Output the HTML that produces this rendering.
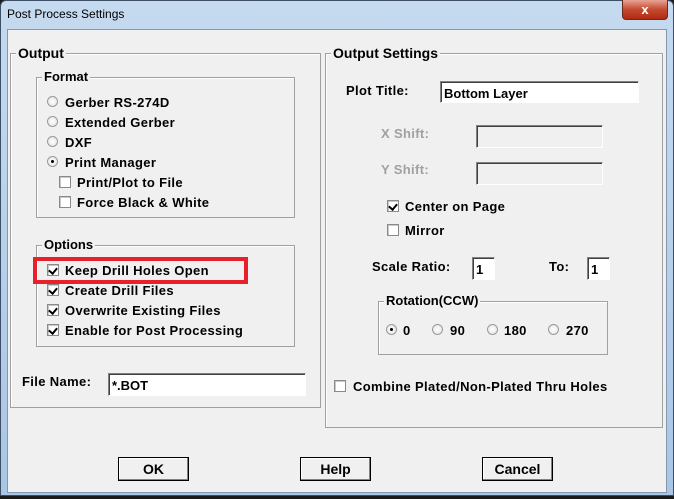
<!DOCTYPE html>
<html><head><meta charset="utf-8"><style>
*{margin:0;padding:0;box-sizing:border-box}
body{width:674px;height:499px;overflow:hidden;background:#1a1a1a;font-family:"Liberation Sans",Arial,sans-serif;font-weight:bold;font-size:13px;color:#000;position:relative}
.a{position:absolute}
.frame{left:0;top:0;width:674px;height:496px;background:linear-gradient(#c5daef,#a9c6e6);border:1px solid #3c4f66;border-radius:6px 6px 0 0}
.client{left:7px;top:29px;width:660px;height:464px;background:#f0f0f0;border:1px solid #8397b0}
.gb{position:absolute;border:1px solid #a0a0a0;box-shadow:1px 1px 0 #fff inset}
.gl{position:absolute;background:#f0f0f0;padding:0 2px;line-height:14px}
.t{position:absolute;line-height:14px;white-space:nowrap;letter-spacing:0.35px;margin-top:1px}
.rb{position:absolute;width:11px;height:11px;border-radius:50%;border:1px solid #9a9a9a;background:radial-gradient(#fff,#e0e0e0)}
.rb.on::after{content:"";position:absolute;left:3px;top:3px;width:3px;height:3px;background:#000;border-radius:50%}
.cb{position:absolute;width:12px;height:12px;border:1px solid #8a8a8a;background:#fff;box-shadow:inset 1px 1px 0 #c8c8c8}
.cb.on::after{content:"";position:absolute;left:2px;top:1px;width:4px;height:6px;border:solid #000;border-width:0 2px 2px 0;transform:rotate(40deg)}
.inp{position:absolute;background:#fff;border:1px solid;border-color:#808080 #fff #fff #808080;box-shadow:inset 1px 1px 0 #404040;padding:4px 0 0 3px;font-size:13px;line-height:15px}
.dis{background:#f0f0f0}
.btn{position:absolute;height:24px;border:1px solid #000;background:#f0f0f0;box-shadow:inset -1px -1px 0 #808080,inset 1px 1px 0 #fff;text-align:center;line-height:22px;font-family:"Liberation Sans Narrow","Liberation Sans",sans-serif;font-size:14px}
.g{color:#a0a0a0}
</style></head><body>
<div class="a frame"></div>
<div class="a" style="left:7px;top:7px;font-weight:normal;font-size:12px;color:#000">Post Process Settings</div>
<div class="a" style="left:622px;top:0;width:46px;height:20px;background:linear-gradient(#e8a494,#c44a30 50%,#b02a10);border:1px solid #6b2a20;border-top:none;border-radius:0 0 4px 4px;color:#fff;text-align:center;line-height:19px;font-size:13px">x</div>
<div class="a client"></div>

<div class="gb" style="left:10px;top:53px;width:311px;height:355px"></div>
<div class="gl" style="left:16px;top:46px;font-size:14px">Output</div>
<div class="gb" style="left:36px;top:77px;width:259px;height:141px"></div>
<div class="gl" style="left:42px;top:70px">Format</div>
<div class="rb" style="left:47px;top:96px"></div><div class="t" style="left:65px;top:95px">Gerber RS-274D</div>
<div class="rb" style="left:47px;top:116px"></div><div class="t" style="left:65px;top:115px">Extended Gerber</div>
<div class="rb" style="left:47px;top:136px"></div><div class="t" style="left:65px;top:135px">DXF</div>
<div class="rb on" style="left:47px;top:156px"></div><div class="t" style="left:65px;top:155px">Print Manager</div>
<div class="cb" style="left:59px;top:176px"></div><div class="t" style="left:77px;top:175px">Print/Plot to File</div>
<div class="cb" style="left:59px;top:196px"></div><div class="t" style="left:77px;top:195px">Force Black &amp; White</div>

<div class="gb" style="left:36px;top:245px;width:259px;height:102px"></div>
<div class="gl" style="left:42px;top:238px">Options</div>
<div class="cb on" style="left:47px;top:264px"></div><div class="t" style="left:65px;top:263px">Keep Drill Holes Open</div>
<div class="cb on" style="left:47px;top:284px"></div><div class="t" style="left:65px;top:283px">Create Drill Files</div>
<div class="cb on" style="left:47px;top:304px"></div><div class="t" style="left:65px;top:303px">Overwrite Existing Files</div>
<div class="cb on" style="left:47px;top:324px"></div><div class="t" style="left:65px;top:323px">Enable for Post Processing</div>
<div class="a" style="left:33px;top:257px;width:215px;height:27px;border:4px solid #e8202a"></div>

<div class="t" style="left:22px;top:374px">File Name:</div>
<div class="inp" style="left:108px;top:373px;width:198px;height:23px">*.BOT</div>

<div class="gb" style="left:325px;top:53px;width:338px;height:375px"></div>
<div class="gl" style="left:331px;top:46px;font-size:14px">Output Settings</div>
<div class="t" style="left:346px;top:83px">Plot Title:</div>
<div class="inp" style="left:440px;top:81px;width:199px;height:22px">Bottom Layer</div>
<div class="t g" style="left:381px;top:126px">X Shift:</div>
<div class="inp dis" style="left:476px;top:125px;width:127px;height:23px"></div>
<div class="t g" style="left:381px;top:162px">Y Shift:</div>
<div class="inp dis" style="left:476px;top:162px;width:127px;height:23px"></div>
<div class="cb on" style="left:387px;top:200px"></div><div class="t" style="left:405px;top:199px">Center on Page</div>
<div class="cb" style="left:387px;top:224px"></div><div class="t" style="left:405px;top:223px">Mirror</div>
<div class="t" style="left:372px;top:259px">Scale Ratio:</div>
<div class="inp" style="left:472px;top:257px;width:23px;height:23px">1</div>
<div class="t" style="left:549px;top:259px">To:</div>
<div class="inp" style="left:587px;top:257px;width:23px;height:23px">1</div>
<div class="gb" style="left:378px;top:301px;width:230px;height:54px"></div>
<div class="gl" style="left:384px;top:294px">Rotation(CCW)</div>
<div class="rb on" style="left:386px;top:324px"></div><div class="t" style="left:403px;top:323px">0</div>
<div class="rb" style="left:432px;top:324px"></div><div class="t" style="left:450px;top:323px">90</div>
<div class="rb" style="left:487px;top:324px"></div><div class="t" style="left:504px;top:323px">180</div>
<div class="rb" style="left:548px;top:324px"></div><div class="t" style="left:566px;top:323px">270</div>
<div class="cb" style="left:334px;top:380px"></div><div class="t" style="left:353px;top:379px">Combine Plated/Non-Plated Thru Holes</div>

<div class="btn" style="left:118px;top:457px;width:71px">OK</div>
<div class="btn" style="left:300px;top:457px;width:71px">Help</div>
<div class="btn" style="left:482px;top:457px;width:71px">Cancel</div>
</body></html>
